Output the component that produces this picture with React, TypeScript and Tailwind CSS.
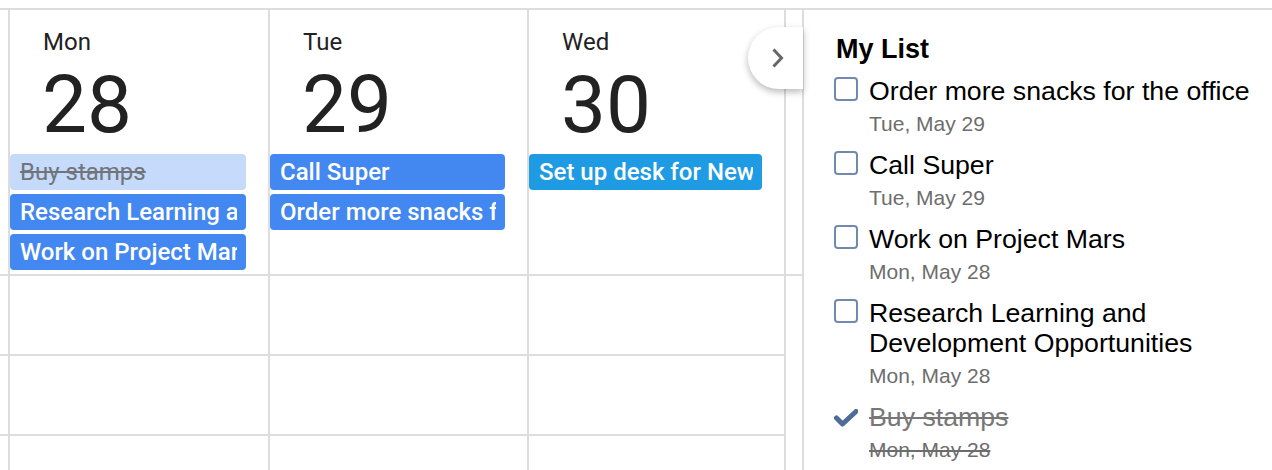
import React from 'react';

type CalEvent = { title: string; done?: boolean; tone?: 'blue' | 'cyan' };

const days: { day: string; date: string; width: string; events: CalEvent[] }[] = [
  {
    day: 'Mon',
    date: '28',
    width: 'w-[260px]',
    events: [
      { title: 'Buy stamps', done: true },
      { title: 'Research Learning and Development Opportunities' },
      { title: 'Work on Project Mars' },
    ],
  },
  {
    day: 'Tue',
    date: '29',
    width: 'w-[259px]',
    events: [{ title: 'Call Super' }, { title: 'Order more snacks for the office' }],
  },
  {
    day: 'Wed',
    date: '30',
    width: 'w-[257px]',
    events: [{ title: 'Set up desk for New Starter', tone: 'cyan' }],
  },
];

const tasks = [
  { title: 'Order more snacks for the office', date: 'Tue, May 29' },
  { title: 'Call Super', date: 'Tue, May 29' },
  { title: 'Work on Project Mars', date: 'Mon, May 28' },
  { title: 'Research Learning and Development Opportunities', date: 'Mon, May 28' },
  { title: 'Buy stamps', date: 'Mon, May 28', done: true },
];

const EventBar: React.FC<{ ev: CalEvent }> = ({ ev }) => {
  const color = ev.done
    ? 'bg-[#c6dafc] text-[#70757a] line-through font-normal'
    : ev.tone === 'cyan'
      ? 'bg-[#1e9be2] text-white font-medium'
      : 'bg-[#4387f0] text-white font-medium';
  return (
    <div className={`mr-[22px] h-[36px] rounded-[4px] pl-[10px] pr-[9px] text-[24px] leading-[36px] ${color}`}>
      <div className="overflow-hidden whitespace-nowrap">{ev.title}</div>
    </div>
  );
};

const EmptyRows: React.FC = () => (
  <>
    <div className="h-[80px] shrink-0 border-t-2 border-[#dddddd]" />
    <div className="h-[80px] shrink-0 border-t-2 border-[#dddddd]" />
    <div className="h-[80px] shrink-0 border-t-2 border-[#dddddd]" />
  </>
);

export default function App() {
  return (
    <div className="relative h-[470px] w-[1272px] overflow-hidden bg-white pt-2">
      <div className="flex h-[462px] border-t-2 border-[#dddddd]">
        {/* calendar */}
        <div className="flex font-['Roboto',sans-serif]">
          <div className="flex w-[8px] flex-col">
            <div className="h-[264px] shrink-0" />
            <EmptyRows />
          </div>
          {days.map((d) => (
            <div key={d.day} className={`flex flex-col border-l-2 border-[#dddddd] ${d.width}`}>
              <div className="h-[264px] shrink-0">
                <div className="pl-[33px] pt-[18px] text-[24px] leading-[28px] text-[#222222]">{d.day}</div>
                <div className="pl-[32px] pt-[9px] text-[80px] leading-[80px] text-[#222222]">{d.date}</div>
                <div className="mt-[9px] flex flex-col gap-[4px]">
                  {d.events.map((ev) => (
                    <EventBar key={ev.title} ev={ev} />
                  ))}
                </div>
              </div>
              <EmptyRows />
            </div>
          ))}
          <div className="flex w-[20px] flex-col border-x-2 border-[#dddddd]">
            <div className="h-[264px] shrink-0" />
            <div className="h-[80px] shrink-0 border-t-2 border-[#dddddd]" />
          </div>
        </div>

        {/* task list */}
        <div className="flex-1 pl-[30px] pt-[23px] font-['Liberation_Sans',Arial,sans-serif] text-black">
          <div className="pl-[2px] text-[27px] font-bold leading-[32px]">My List</div>
          <div className="mt-[11px] flex flex-col gap-[14px]">
            {tasks.map((t) => (
              <div key={t.title} className="flex items-start gap-[11px]">
                {t.done ? (
                  <svg width="24" height="18" viewBox="0 0 24 18" className="mt-[7px] shrink-0">
                    <path d="M2.5 9 L8.5 15 L22 2.5" fill="none" stroke="#4d6c98" strokeWidth="5" strokeLinecap="round" strokeLinejoin="round" />
                  </svg>
                ) : (
                  <div className="mt-[1px] h-[24px] w-[24px] shrink-0 rounded-[4px] border-2 border-[#7089ad] bg-white" />
                )}
                <div className="flex flex-col">
                  <div className={`max-w-[395px] text-[26.7px] leading-[30px] ${t.done ? 'text-[#777777] line-through' : ''}`}>
                    {t.title}
                  </div>
                  <div className={`mt-[6px] text-[21px] leading-[24px] text-[#6d6d6d] ${t.done ? 'line-through' : ''}`}>
                    {t.date}
                  </div>
                </div>
              </div>
            ))}
          </div>
        </div>
      </div>

      {/* collapse tab */}
      <button className="absolute left-[748px] top-[27px] flex h-[62px] w-[55px] items-center justify-center rounded-l-full bg-white pl-[2px] shadow-[0_3px_7px_rgba(0,0,0,0.28)]">
        <svg width="16" height="22" viewBox="0 0 16 22">
          <path d="M4.5 2.5 L12.5 11 L4.5 19.5" fill="none" stroke="#666666" strokeWidth="3" />
        </svg>
      </button>
    </div>
  );
}
